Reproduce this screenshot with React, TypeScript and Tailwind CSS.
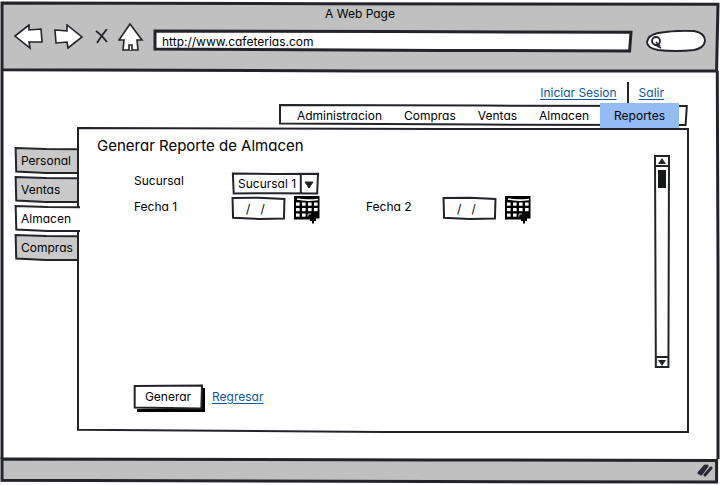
import React, { useState } from "react";

const INK = "#22242a";

/** Hand-drawn outline that fills its relative parent. Points run 0-100 on both axes. */
function Sketch({ points, fill = "none", width = 2 }: { points: string; fill?: string; width?: number }) {
  return (
    <svg
      aria-hidden="true"
      className="pointer-events-none absolute inset-0 h-full w-full overflow-visible"
      viewBox="0 0 100 100"
      preserveAspectRatio="none"
    >
      <path d={points} fill={fill} stroke={INK} strokeWidth={width} vectorEffect="non-scaling-stroke" strokeLinejoin="miter" />
    </svg>
  );
}

function ToolButton({ label, className, children }: { label: string; className: string; children: React.ReactNode }) {
  return (
    <button type="button" aria-label={label} className={className}>
      {children}
    </button>
  );
}

function Calendar() {
  const cols = [2, 8, 14, 20];
  const rows = [6.5, 12, 17.5];
  return (
    <svg width="26" height="28" viewBox="0 0 26 28" aria-hidden="true">
      <path d="M0 0 H25.5 V22.5 H22 V25 H20 V27.5 H18 V25 H16 V23.5 H0 Z" fill="#000" />
      <path d="M3 3 Q12 5 24 3.5" fill="none" stroke="#fff" strokeWidth="1.6" />
      {rows.map((y) =>
        cols.map((x) =>
          y > 17 && x > 8 ? null : <rect key={`${x}-${y}`} x={x} y={y} width="3.6" height="3.2" fill="#fff" />,
        ),
      )}
      <path d="M14 20.5 V18 H17" fill="none" stroke="#ccc" strokeWidth="1" />
    </svg>
  );
}

function DateField({ id, label }: { id: string; label: string }) {
  return (
    <div className="flex items-start">
      <div className="relative mt-px h-[22px] w-[53px]">
        <Sketch points="M1 5 L50 3 L99 9 L98 98 L50 100 L2 94 Z" fill="#fff" />
        <input
          id={id}
          type="text"
          defaultValue="/   /"
          className="relative block h-full w-full bg-transparent pl-[14px] outline-none"
        />
      </div>
      <button type="button" aria-label={`Abrir calendario de ${label}`} className="ml-[9px] h-7 w-[26px]">
        <Calendar />
      </button>
    </div>
  );
}

const MENU = ["Administracion", "Compras", "Ventas", "Almacen", "Reportes"];
const TABS = ["Personal", "Ventas", "Almacen", "Compras"];

export default function App() {
  const [section, setSection] = useState("Reportes");
  const [tab, setTab] = useState("Almacen");

  return (
    <div className="flex min-h-screen flex-col bg-white px-[2px] pt-[3px] pb-[3px] font-['Inter','Liberation_Sans',sans-serif] text-[12px] leading-4 text-black [font-feature-settings:'cv11']">
      <header className="relative bg-[#c0c0c0] px-3 pb-[19px]">
        <Sketch points="M0 0 L45 1 L100 2 L99.8 100 L50 100 L0 98 Z" width={3} />
        <h1 className="relative pt-[3px] text-center">A Web Page</h1>
        <div className="relative flex h-[30px] items-center">
          <ToolButton label="Atras" className="h-[26px] w-[30px]">
            <svg width="30" height="26" viewBox="0 0 30 26" fill="#fff" stroke={INK} strokeWidth="1.6">
              <path d="M1 12 L15 1 L15 6 L27 5 L28 18 L15 18 L16 24 Z" />
            </svg>
          </ToolButton>
          <ToolButton label="Adelante" className="ml-[10px] h-[26px] w-[30px]">
            <svg width="30" height="26" viewBox="0 0 30 26" fill="#fff" stroke={INK} strokeWidth="1.6">
              <path d="M1 6 L13 7 L13 1 L28 13 L14 24 L13 18 L2 19 Z" />
            </svg>
          </ToolButton>
          <ToolButton label="Detener" className="ml-[11px] h-4 w-[14px]">
            <svg width="14" height="16" viewBox="0 0 14 16" fill="none" stroke={INK} strokeWidth="1.8">
              <path d="M1 2 Q7 6 12 13 M12 0 Q7 6 2 14" />
            </svg>
          </ToolButton>
          <ToolButton label="Inicio" className="ml-[9px] h-7 w-[26px]">
            <svg width="26" height="28" viewBox="0 0 26 28" fill="#fff" stroke={INK} strokeWidth="1.6">
              <path d="M1 17 L12 1 L24 17 L19 17 L20 27 L5 27 L6 17 Z" />
              <path d="M11 27 V22 H14 V27" />
            </svg>
          </ToolButton>
          <div className="relative mt-2 ml-[11px] h-5 flex-1">
            <Sketch points="M0 0 L50 3 L100 6 L99.7 100 L60 97 L0 90 Z" fill="#fff" width={3} />
            <input
              type="text"
              aria-label="Direccion"
              defaultValue="http://www.cafeterias.com"
              className="relative block h-full w-full bg-transparent pl-[7px] outline-none"
            />
          </div>
          <div className="relative mt-2 ml-[15px] h-[22px] w-[60px]">
            <svg className="absolute inset-0" width="60" height="22" viewBox="0 0 60 22" aria-hidden="true">
              <path
                d="M12 3 Q30 0 48 1 Q59 3 59 11 Q58 18 48 20 Q30 22 12 20 Q1 18 1 12 Q2 5 12 3 Z"
                fill="#fff"
                stroke={INK}
                strokeWidth="1.8"
              />
              <circle cx="10" cy="11" r="4" fill="none" stroke={INK} strokeWidth="1.8" />
              <path d="M8 14 L15 18 M10 12 L14 16" stroke={INK} strokeWidth="1.5" />
            </svg>
            <input type="text" aria-label="Buscar" className="relative block h-full w-full bg-transparent pr-2 pl-5 outline-none" />
          </div>
        </div>
      </header>

      <main className="relative flex flex-1 flex-col pt-[11px] pr-[30px] pb-[27px] pl-[13px]">
        <Sketch points="M0 0 L0 100 M99.9 0 L100 50 L100 100" width={3} />
        <div className="relative flex h-[21px] items-center justify-end pr-6 text-[#10569c]">
          <a href="#sesion" className="underline underline-offset-2">
            Iniciar Sesion
          </a>
          <span className="mx-[10px] h-[21px] w-[2px] bg-[#22242a]" />
          <a href="#salir" className="underline underline-offset-2">
            Salir
          </a>
        </div>

        <nav className="relative z-10 flex h-[25px] items-center self-end pr-[9px] pl-[6px]">
          <div className="absolute inset-x-0 top-[2px] bottom-[3px]">
            <Sketch points="M0 0 L50 3 L99.7 5 L99.4 100 L50 98 L0 92 Z" fill="#fff" />
          </div>
          {MENU.map((item) => (
            <button
              key={item}
              type="button"
              onClick={() => setSection(item)}
              className={`relative h-[25px] ${section === item ? "bg-[#94bbf3] px-[14px]" : "px-[11px]"}`}
            >
              {item}
            </button>
          ))}
        </nav>

        <div className="relative flex flex-1">
          <div role="tablist" aria-label="Reportes" className="flex w-[63px] flex-col gap-1 pt-5">
            {TABS.map((name) => {
              const active = tab === name;
              return (
                <button
                  key={name}
                  type="button"
                  role="tab"
                  aria-selected={active}
                  onClick={() => setTab(name)}
                  className={`relative h-[25px] pl-[6px] text-left ${active ? "z-10 w-[65px]" : "w-[62px]"}`}
                >
                  <Sketch points="M100 5 L50 4 L1 0 L2 94 L50 100 L100 100" fill={active ? "#fff" : "#c9c9c9"} />
                  <span className="relative">{name}</span>
                </button>
              );
            })}
          </div>

          <section className="relative flex min-h-[304px] flex-1 pt-2 pr-[19px] pl-[19px]">
            <Sketch points="M0 0 L60 0.3 L100 0.3 L100 100 L50 100 L0 99.3 Z" fill="#fff" />
            <form className="relative flex flex-1 flex-col" onSubmit={(e) => e.preventDefault()}>
              <h2 className="text-[15px] leading-5">Generar Reporte de Almacen</h2>
              <div className="mt-[17px] flex h-[21px] items-start pl-[37px]">
                <label htmlFor="sucursal" className="w-[98px]">
                  Sucursal
                </label>
                <div className="relative h-[21px] w-[86px]">
                  <Sketch points="M1 2 L50 5 L100 4 L99 98 L50 96 L2 98 Z M80 4 V97" fill="#fff" />
                  <select id="sucursal" className="relative block h-full w-full appearance-none bg-transparent pl-[6px] outline-none">
                    <option>Sucursal 1</option>
                  </select>
                  <svg className="pointer-events-none absolute top-2 right-[4px]" width="10" height="8" viewBox="0 0 10 8" aria-hidden="true">
                    <path d="M1 1 L9 1 L5 7 Z" fill={INK} stroke={INK} />
                  </svg>
                </div>
              </div>
              <div className="mt-[2px] flex h-7 items-start pl-[37px]">
                <label htmlFor="fecha1" className="w-[98px] pt-[3px]">
                  Fecha 1
                </label>
                <DateField id="fecha1" label="Fecha 1" />
                <label htmlFor="fecha2" className="ml-[46px] w-[77px] pt-[3px]">
                  Fecha 2
                </label>
                <DateField id="fecha2" label="Fecha 2" />
              </div>
              <div className="mt-auto mb-[23px] flex items-center pl-[37px]">
                <button type="submit" className="relative h-6 w-[68px] bg-white shadow-[3px_3px_0_0_#000]">
                  <Sketch points="M1 4 L100 2 L99 98 L1 94 Z" fill="#fff" />
                  <span className="relative">Generar</span>
                </button>
                <a href="#regresar" className="ml-[10px] text-[#10569c] underline underline-offset-2">
                  Regresar
                </a>
              </div>
            </form>
            <div className="relative mt-5 mb-[65px] flex w-[14px] flex-col">
              <Sketch points="M0 0 L100 0 L96 100 L6 100 Z" fill="#fff" />
              <button type="button" aria-label="Subir" className="relative flex h-[11px] items-center justify-center border-b-2 border-[#22242a]">
                <svg width="8" height="6" viewBox="0 0 8 6" aria-hidden="true">
                  <path d="M4 0 L8 6 H0 Z" fill={INK} />
                </svg>
              </button>
              <div className="relative flex-1 px-[3px] pt-[3px]">
                <div className="h-[18px] bg-[#15171a]" />
              </div>
              <button type="button" aria-label="Bajar" className="relative flex h-[11px] items-center justify-center border-t-2 border-[#22242a]">
                <svg width="8" height="6" viewBox="0 0 8 6" aria-hidden="true">
                  <path d="M0 0 H8 L4 6 Z" fill={INK} />
                </svg>
              </button>
            </div>
          </section>
        </div>
      </main>

      <footer className="relative flex h-[23px] items-center justify-end bg-[#c0c0c0] pr-[5px]">
        <Sketch points="M0 0 L60 4 L99.8 6 L99.8 100 L60 98 L0 92 Z" width={3} />
        <svg className="relative" width="16" height="15" viewBox="0 0 16 15" fill="none" stroke="#2a2633" strokeWidth="3" strokeLinecap="round" aria-hidden="true">
          <path d="M2 10 L8 3 M4 11 L10 3 M8 12 L14 5" />
        </svg>
      </footer>
    </div>
  );
}
